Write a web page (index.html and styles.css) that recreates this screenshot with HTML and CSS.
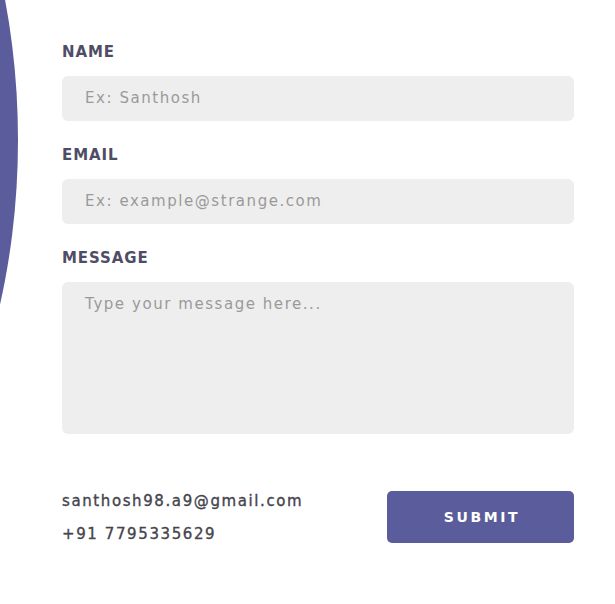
FILE: index.html
```html
<!DOCTYPE html>
<html>
<head>
<meta charset="utf-8">
<link rel="stylesheet" href="styles.css">
</head>
<body>
<div class="blob"></div>
<form class="form">
  <label class="label">NAME</label>
  <div class="input">Ex: Santhosh</div>
  <label class="label">EMAIL</label>
  <div class="input">Ex: example@strange.com</div>
  <label class="label">MESSAGE</label>
  <div class="input textarea">Type your message here...</div>
  <div class="footer">
    <div class="contact">
      <div>santhosh98.a9@gmail.com</div>
      <div>+91 7795335629</div>
    </div>
    <button type="button" class="submit">SUBMIT</button>
  </div>
</form>
</body>
</html>
```
FILE: styles.css
```css
html, body {
  margin: 0;
  padding: 0;
  background: #ffffff;
  overflow: hidden;
}
body {
  width: 615px;
  height: 604px;
  position: relative;
  font-family: "DejaVu Sans", sans-serif;
}
.blob {
  position: absolute;
  left: -582px;
  top: -342px;
  width: 600px;
  height: 964px;
  border-radius: 50%;
  background: #5a5c9b;
}
.form {
  display: flex;
  flex-direction: column;
  width: 512px;
  padding: 42px 0 0 62px;
}
.label {
  font-size: 15px;
  line-height: 20px;
  font-weight: 600;
  letter-spacing: 0.9px;
  color: #4f4d66;
  margin-bottom: 14px;
}
.input {
  height: 45px;
  box-sizing: border-box;
  background: #eeeeee;
  border-radius: 6px;
  padding: 12px 23px;
  font-size: 15px;
  line-height: 21px;
  letter-spacing: 1.55px;
  color: #9a9a9a;
  margin-bottom: 24px;
}
.textarea {
  height: 152px;
  padding-top: 12px;
  margin-bottom: 60px;
}
.footer {
  display: flex;
  justify-content: space-between;
  align-items: flex-start;
}
.contact {
  display: flex;
  flex-direction: column;
  gap: 13px;
  font-size: 15px;
  line-height: 20px;
  letter-spacing: 1.6px;
  color: #45444d;
  -webkit-text-stroke: 0.35px #45444d;
  margin-top: -3px;
}
.submit {
  width: 187px;
  height: 52px;
  border: none;
  border-radius: 5px;
  background: #5a5c9b;
  color: #ffffff;
  font-family: "DejaVu Sans", sans-serif;
  font-weight: 700;
  font-size: 14px;
  letter-spacing: 2.6px;
  padding: 0 0 0 3px;
  margin-top: -3px;
}
```
